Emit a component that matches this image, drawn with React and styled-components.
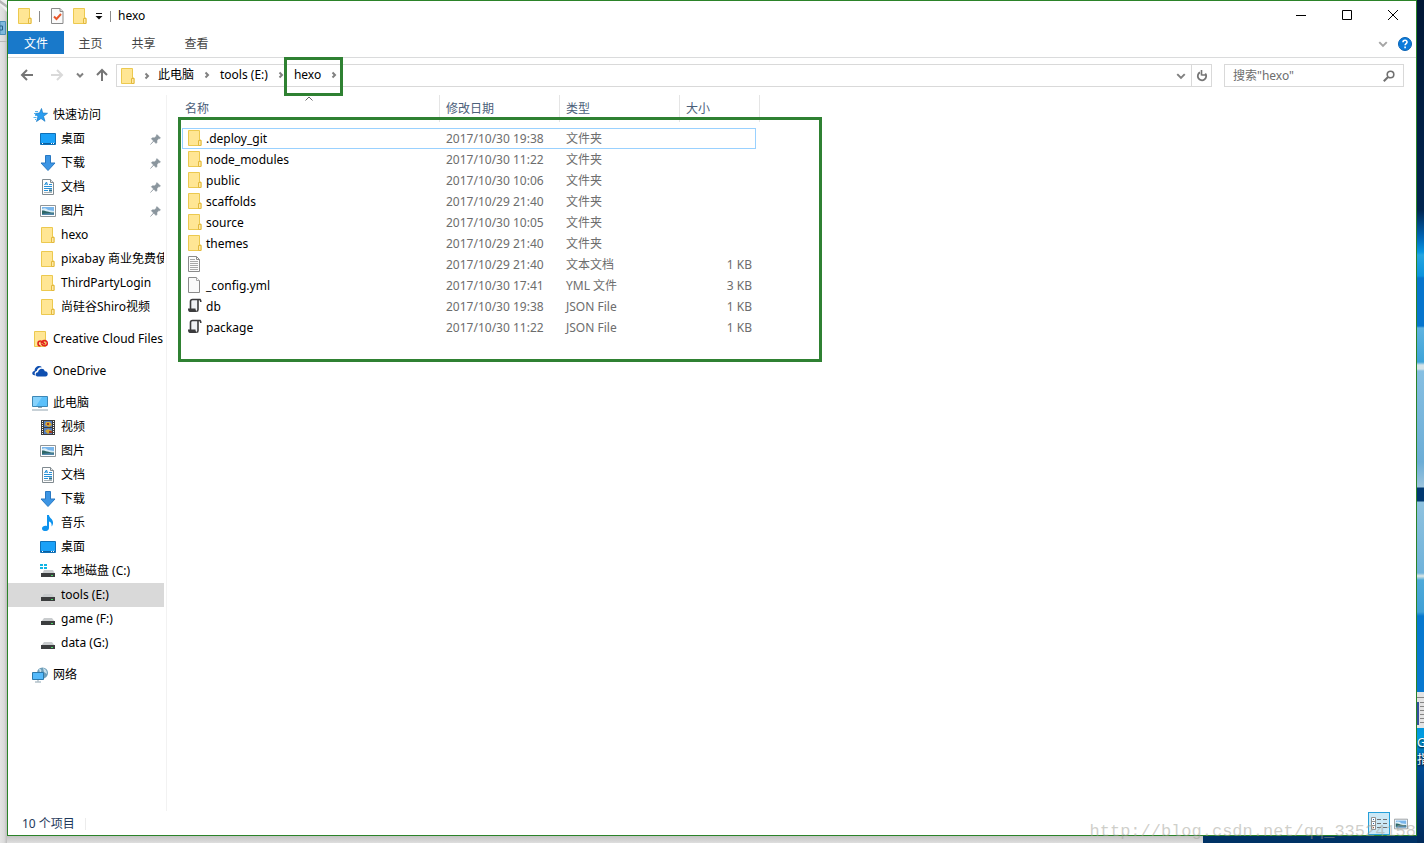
import styled, { createGlobalStyle } from 'styled-components';

const GlobalStyle = createGlobalStyle`
  * {
    box-sizing: border-box;
  }

  body {
    margin: 0;
    background: #fff;
    color: #000;
    font-family: 'Noto Sans', 'Noto Sans CJK SC', sans-serif;
    font-size: 12px;
    line-height: 16px;
  }

  button,
  input {
    font: inherit;
    color: inherit;
    border: 0;
    padding: 0;
    margin: 0;
    background: none;
  }

  svg {
    display: block;
    flex: none;
  }
`;

const Desktop = styled.div`
  position: relative;
  display: grid;
  grid-template-columns: 7px minmax(0, 1fr) 7px;
  grid-template-rows: 1fr 7px;
  min-height: calc(100vh - 9px);
  overflow: hidden;
`;

const LeftEdge = styled.div`
  grid-row: 1 / 3;
  background: linear-gradient(90deg, #e4e4e4, #dadada 60%, #bdbdbd);
`;

const RightEdge = styled.div`
  grid-row: 1 / 3;
  grid-column: 3;
  display: flex;
  flex-direction: column;
  justify-content: flex-end;
  overflow: hidden;
  background: linear-gradient(
    #011735 0,
    #012550 210px,
    #0067b8 238px,
    #0795e0 252px,
    #26a5df 255px,
    #0b93dd 276px,
    #0675cd 278px,
    #0675cd 326px,
    #5fb3e0 328px,
    #3da3d8 362px,
    #d5e3e8 365px,
    #d5e3e8 369px,
    #86bfe2 371px,
    #6cadd6 462px,
    #9cc4dd 487px,
    #003870 488px,
    #003870 501px,
    #8fc2df 502px,
    #6fb2da 573px,
    #dfe7e4 576px,
    #4ea9d9 580px,
    #3fa0d6 612px,
    #0678cf 616px,
    #0878d0 690px,
    #00a0e2 740px,
    #004b95 764px,
    #002a5a 843px
  );
`;

const Shortcut = styled.div`
  display: flex;
  flex-direction: column;
  height: 152px;
  color: #fff;
  text-shadow: 0 1px 2px #000;
  overflow: hidden;
`;

const ShortcutLabel = styled.span`
  line-height: 17px;
  white-space: nowrap;
`;

const BottomEdge = styled.div`
  display: flex;
  grid-column: 2;
  grid-row: 2;
  background: linear-gradient(#c4c4c4, #dedede);
`;

const Wallpaper = styled.div`
  width: 214px;
  margin-left: auto;
  background: #003265;
`;

const Window = styled.main`
  display: flex;
  flex-direction: column;
  grid-column: 2;
  grid-row: 1;
  border: 1px solid #2b8329;
  background: #fff;
`;

const TitleBar = styled.header`
  display: flex;
  align-items: center;
  height: 30px;
  padding-left: 10px;
`;

const Separator = styled.span`
  width: 1px;
  height: 11px;
  margin: 0 ${(p) => p.$right || 7}px 0 7px;
  background: #8c8c8c;
`;

const QuickTools = styled.div`
  display: flex;
  align-items: center;
  gap: 8px;
`;

const IconButton = styled.button`
  display: flex;
  align-items: center;
  justify-content: center;
`;

const Title = styled.h1`
  margin: 0;
  font-size: 12px;
  font-weight: 400;
`;

const WindowControls = styled.div`
  display: flex;
  align-self: flex-start;
  margin-left: auto;
`;

const WindowButton = styled(IconButton)`
  width: 46px;
  height: 28px;
`;

const Ribbon = styled.nav`
  display: flex;
  height: 27px;
  border-bottom: 1px solid #dadbdc;
`;

const RibbonTab = styled.button`
  width: ${(p) => (p.$file ? 56 : 53)}px;
  height: 23px;
  padding-top: 2px;
  color: ${(p) => (p.$file ? '#fff' : '#444')};
  background: ${(p) => (p.$file ? '#1979ca' : 'transparent')};
`;

const RibbonActions = styled.div`
  display: flex;
  align-items: center;
  gap: 10px;
  margin-left: auto;
  padding-right: 4px;
`;

const Toolbar = styled.div`
  display: flex;
  align-items: center;
  height: 37px;
  padding: 0 12px 2px 4px;
`;

const NavButton = styled(IconButton)`
  width: ${(p) => p.$width || 30}px;
  height: 23px;
  padding-bottom: 2px;
`;

const AddressBar = styled.div`
  display: flex;
  flex: 1;
  align-items: center;
  height: 23px;
  margin-right: 12px;
  padding-left: 4px;
  border: 1px solid #d9d9d9;
`;

const Crumb = styled.div`
  position: relative;
  display: flex;
  align-items: center;
  padding-bottom: 2px;
`;

const CrumbArrow = styled.span`
  display: flex;
  justify-content: center;
  width: ${(p) => (p.$first ? 23 : 26)}px;
`;

const AddressActions = styled.div`
  display: flex;
  align-self: stretch;
  margin-left: auto;
`;

const AddressButton = styled(IconButton)`
  width: 20px;
  border-left: ${(p) => (p.$divided ? '1px solid #d9d9d9' : '0')};
`;

const SearchBox = styled.label`
  display: flex;
  align-items: center;
  width: 180px;
  height: 23px;
  padding: 0 8px;
  border: 1px solid #d9d9d9;
`;

const SearchInput = styled.input`
  flex: 1;
  min-width: 0;
  outline: none;

  &::placeholder {
    color: #6d6d6d;
    opacity: 1;
  }
`;

const Highlight = styled.div`
  position: absolute;
  border: 3px solid #2f8132;
  pointer-events: none;
`;

const CrumbHighlight = styled(Highlight)`
  top: -10px;
  left: -10px;
  width: 59px;
  height: 39px;
`;

const ListHighlight = styled(Highlight)`
  top: 22px;
  left: 11px;
  width: 644px;
  height: 245px;
`;

const Content = styled.div`
  display: flex;
  flex: 1;
`;

const Sidebar = styled.nav`
  width: 159px;
  padding: 8px 2px 0 0;
  border-right: 1px solid #f2f2f2;
`;

const TreeGroup = styled.ul`
  margin: 0 0 8px;
  padding: 0;
  list-style: none;
`;

const TreeItem = styled.a`
  display: flex;
  align-items: center;
  gap: 5px;
  height: 24px;
  padding: 0 3px 0 ${(p) => (p.$root ? 24 : 32)}px;
  overflow: hidden;
  color: #000;
  background: ${(p) => (p.$selected ? '#d9d9d9' : 'transparent')};
  text-decoration: none;
  white-space: nowrap;
`;

const PinSlot = styled.span`
  margin-left: auto;
`;

const FilePane = styled.section`
  position: relative;
  flex: 1;
  min-width: 0;
  padding-left: 15px;
`;

const FileTable = styled.table`
  display: block;
`;

const TableHead = styled.thead`
  display: block;
  margin-bottom: 6px;
`;

const TableBody = styled.tbody`
  display: block;
`;

const HeaderRow = styled.tr`
  display: grid;
  grid-template-columns: 258px 120px 120px 80px;
`;

const HeaderCell = styled.th`
  position: relative;
  height: 27px;
  padding: 6px 6px 5px ${(p) => (p.$first ? 3 : 6)}px;
  border-right: 1px solid #e5e5e5;
  color: #4c607a;
  font-weight: 400;
  text-align: left;
`;

const SortMark = styled.span`
  position: absolute;
  top: 0;
  left: 123px;
`;

const FileRow = styled.tr`
  display: grid;
  grid-template-columns: 258px 120px 120px 78px;
  width: 574px;
  height: 21px;
  outline: ${(p) => (p.$focused ? '1px solid #99d1ff' : 'none')};
  outline-offset: -1px;
`;

const NameCell = styled.td`
  display: flex;
  align-items: flex-start;
  gap: 4px;
  padding: 2px 0 0 6px;
  line-height: 18px;
`;

const Cell = styled.td`
  padding: 3px 6px 2px;
  color: #6d6d6d;
  text-align: ${(p) => (p.$right ? 'right' : 'left')};
`;

const StatusBar = styled.footer`
  display: flex;
  align-items: center;
  height: 24px;
  padding: 1px 4px 0 14px;
  color: #1e395b;
`;

const StatusDivider = styled.span`
  width: 1px;
  height: 12px;
  margin-left: 10px;
  background: #ececec;
`;

const ViewButtons = styled.div`
  display: flex;
  align-self: stretch;
  margin-left: auto;
`;

const ViewButton = styled(IconButton)`
  width: 22px;
  border: 1px solid ${(p) => (p.$active ? '#26a0da' : 'transparent')};
  background: ${(p) => (p.$active ? '#cbe8f6' : 'transparent')};
`;

const Watermark = styled.div`
  position: absolute;
  right: 8px;
  bottom: 1px;
  color: rgba(160, 160, 150, 0.5);
  font-family: 'Liberation Mono', monospace;
  font-size: 17px;
  line-height: 20px;
  pointer-events: none;
`;

const FolderIcon = ({ width = 14 }) => (
  <svg width={width} height="16" viewBox="0 0 14 16">
    <path d="M.5.5h11v9.5h1.5v5.5H.5z" fill="#ffe694" stroke="#ecc94f" />
    <path d="M10.5 15.5v-5H13v5z" fill="#ffeaa5" stroke="#e3b93e" />
  </svg>
);

const ChecklistIcon = () => (
  <svg width="14" height="16" viewBox="0 0 14 16">
    <path d="M.5.5h8.5l3 3v12H.5z" fill="#fafafa" stroke="#8a8a8a" />
    <path d="M9 .5v3h3" fill="#ddd" stroke="#8a8a8a" />
    <path d="M3 8.5 5.5 11 10 6" fill="none" stroke="#e8572a" strokeWidth="2" />
  </svg>
);

const MenuCaret = () => (
  <svg width="8" height="8" viewBox="0 0 8 8">
    <path d="M1 1h6v1H1zM.5 4h7L4 7.5z" fill="#111" />
  </svg>
);

const Chevron = ({ size = 8, dir = 'right', color = '#808080', weight = 2 }) => {
  const paths = {
    right: 'M2.5 1.5 5 4 2.5 6.5',
    down: 'M1 2.5 4 5.5 7 2.5',
    up: 'M.5 5.5 4 2 7.5 5.5',
  };
  return (
    <svg width={size} height={size} viewBox="0 0 8 8">
      <path d={paths[dir]} fill="none" stroke={color} strokeWidth={weight} vectorEffect="non-scaling-stroke" />
    </svg>
  );
};

const Arrow = ({ dir, color = '#757575' }) => {
  const paths = {
    left: 'M13 7H2M7 2 2 7l5 5',
    right: 'M1 7h11M7 2l5 5-5 5',
    up: 'M7 13V2M2 7l5-5 5 5',
  };
  return (
    <svg width="14" height="14" viewBox="0 0 14 14">
      <path d={paths[dir]} fill="none" stroke={color} strokeWidth="2" />
    </svg>
  );
};

const StarIcon = () => (
  <svg width="16" height="16" viewBox="0 0 16 16">
    <path d="m9.500 1.500 1.200 4.500 4.800.3-4 3 1.500 5L9 11.500 4.500 14.500l1.500-5L2.500 6.500 7.500 6z" fill="#2a9df0" stroke="#1579c4" strokeWidth=".7" />
    <path d="M3 4.500h3M2 6.500h2M3 8.500h2M1.500 10.500h3M3 12.500h1" stroke="#4fb3f0" />
  </svg>
);

const DesktopIcon = () => (
  <svg width="16" height="16" viewBox="0 0 16 16">
    <path d="M.5 2.500h15v11H.500z" fill="#1aa1f8" stroke="#0e70b8" />
    <path d="M15 3v8L5 13h10z" fill="#3db0fb" />
    <path d="M1 12.500h14" stroke="#0b5f9e" />
    <path d="M2 12.500h1M11 12.500h1M13 12.500h1" stroke="#fff" />
  </svg>
);

const DownloadIcon = () => (
  <svg width="16" height="16" viewBox="0 0 16 16">
    <path d="M5.500.500h5V8h4.500L8 15.500 1 8h4.500z" fill="#3c95e4" stroke="#2878c2" />
  </svg>
);

const DocumentIcon = () => (
  <svg width="16" height="16" viewBox="0 0 16 16">
    <path d="M2.500.500h8l3 3v12h-11z" fill="#fdfdfd" stroke="#808a90" />
    <path d="M10.500.500v3h3" fill="#e6e6e6" stroke="#808a90" />
    <path d="m4.500 6 2-3 1 3M5 5h2M9 5.500h3M4 7.500h8M4 9.500h8M4 11.500h4" fill="none" stroke="#2590d8" />
    <path d="M9 10.500h3v2H9z" fill="#2b7190" />
    <path d="M4 13.500h8" stroke="#a8b0b4" />
  </svg>
);

const PictureIcon = ({ width = 16 }) => (
  <svg width={width} height={width} viewBox="0 0 16 16">
    <path d="M.5 2.500h15v11H.500z" fill="#fff" stroke="#8e9599" />
    <path d="M2 4h12v8H2z" fill="#79b6ec" />
    <path d="M2 6c3-2 5 0 6 1l6 1v2H2z" fill="#d8edf8" />
    <path d="M2 7.500c4 0 6 2 12 2v1.500H2z" fill="#2d6667" />
    <path d="M2 11c4-1 8-1 12-.5V12H2z" fill="#5187aa" />
  </svg>
);

const CreativeCloudIcon = () => (
  <svg width="16" height="16" viewBox="0 0 16 16">
    <path d="M2.500.500h11v15h-11z" fill="#ffe694" stroke="#ecc94f" />
    <path d="M8.500 15a2.500 2.500 0 0 1 0-5c2 0 3 3 4.500 3M9 12.500C10 9 15 8.500 15.200 12S11 15.500 9.500 13" fill="none" stroke="#e1251b" strokeWidth="1.600" />
  </svg>
);

const OneDriveIcon = () => (
  <svg width="16" height="16" viewBox="0 0 16 16">
    <path d="M1.500 12C-.500 11.500 0 8 2.500 8 2.500 4 7 1.500 10 4.200 6.500 4 5 6 4.800 8 2.500 8.500 2 11 3.500 12.500z" fill="#0f4fb0" />
    <path d="M5.500 13.500C2.500 13 3.500 9 6 9.300 6.500 5 12 4.500 12.800 8.200c3.500-.200 4 4.800.700 5.300z" fill="#0f4fb0" />
  </svg>
);

const ComputerIcon = () => (
  <svg width="16" height="16" viewBox="0 0 16 16">
    <path d="M.5 1.500h15v10H.500z" fill="#5bc0fa" stroke="#3d87b5" />
    <path d="M1 2h9L4 11H1z" fill="#86d2fc" />
    <path d="M6 12.500h4M0 15h16" stroke="#91a4b0" />
  </svg>
);

const VideoIcon = () => (
  <svg width="16" height="16" viewBox="0 0 16 16">
    <path d="M1 1h14v15H1z" fill="#3c3c3c" />
    <path d="M4 2h8v6H4zM4 9h8v6H4z" fill="#547fc2" />
    <path d="M6 3h4l2 3-3 2-4-2zM5 12l3-2 4 2-4 3z" fill="#d4a835" />
    <path d="M7 4h2v2H7zM9 12h3v2H9z" fill="#a33c24" />
    <path d="M2.500 2v13M13.500 2v13" stroke="#fff" strokeDasharray="1 1" />
  </svg>
);

const MusicIcon = () => (
  <svg width="16" height="16" viewBox="0 0 16 16">
    <path d="M7 0h2c0 3 4.500 4 4 8.500-.200 1.500-1 2.500-1.500 3C12 8.500 11 7 9 6.500V13c0 4-7 4-7 .500C2 11 5 10.300 7 11z" fill="#0f93ee" />
  </svg>
);

const DriveIcon = ({ system }) => (
  <svg width="16" height="16" viewBox="0 0 16 16">
    {system && <path d="M0 1h3v2H0zM4 1h3v2H4zM0 4h3v2H0zM4 4h3v2H4z" fill="#12b5e5" />}
    <path d={system ? 'M4 7h9l2 4H2z' : 'M4 7h8l3 4H1z'} fill="#c9ccce" />
    <path d="M1 10h14v4H1z" fill="#3b3d3e" />
    <path d="M11 12.500h2" stroke="#4bd665" />
  </svg>
);

const NetworkIcon = () => (
  <svg width="16" height="16" viewBox="0 0 16 16">
    <circle cx="10.500" cy="6" r="5.500" fill="#6e9eb9" />
    <path d="M7 2c3 0 3 2 1 4M11 1c3 1 4 3 4 6l-3-2z" fill="#c8e0ec" />
    <path d="M.5 5.500h11v7H.500z" fill="#55bafb" stroke="#2c79ab" />
    <path d="M6 13v1.500M3 15h6" stroke="#8da3b0" />
  </svg>
);

const PinIcon = () => (
  <svg width="11" height="11" viewBox="0 0 11 11">
    <path d="m7 .500 3.500 3.500-1 .700-.700-.200L7 6.500v2l-1 1L3.800 7.200.500 10.500 3.500 7 1.300 4.800l1-1h2.200L6.500 2 6.300 1.200z" fill="#8a959d" stroke="#8a959d" strokeWidth=".5" />
  </svg>
);

const TextFileIcon = () => (
  <svg width="14" height="16" viewBox="0 0 14 16">
    <path d="M.5.500h8l3 3v12H.500z" fill="#fcfcfc" stroke="#8b8b8b" />
    <path d="M8.500.500v3h3" fill="none" stroke="#8b8b8b" />
    <path d="M2 3.500h5M2 5.500h8M2 7.500h8M2 9.500h8M2 11.500h8M2 13.500h8" stroke="#a8a8a8" />
  </svg>
);

const BlankFileIcon = () => (
  <svg width="14" height="16" viewBox="0 0 14 16">
    <path d="M.5.500h8l3 3v12H.500z" fill="#fafafa" stroke="#8b8b8b" />
    <path d="M8.500.500v3h3" fill="#fff" stroke="#a5a5a5" />
  </svg>
);

const JsonFileIcon = () => (
  <svg width="14" height="16" viewBox="0 0 14 16">
    <path d="M3 2h7v10H3z" fill="#eff1f4" />
    <path d="M2.500 11V3.500C2.500 2.300 3 1.500 4.500 1.500H12c.700.500.800 1 .800 2.500M10 2v9.500c0 1-.500 1.800-1.500 1.800" fill="none" stroke="#3b3b3d" strokeWidth="1.600" />
    <path d="M0 10.500h7.500c0 1.500.500 2 1.500 3.500H2C.500 14 0 12.500 0 10.500z" fill="#3b3b3d" />
  </svg>
);

const RefreshIcon = () => (
  <svg width="12" height="12" viewBox="0 0 12 12">
    <path d="M9.300 3.500A4.200 4.200 0 1 1 4 2.400" fill="none" stroke="#757575" strokeWidth="1.800" />
    <path d="M5.500 0v5.500M5.500 5h4.500" fill="none" stroke="#757575" strokeWidth="1.600" />
  </svg>
);

const SearchIcon = () => (
  <svg width="12" height="12" viewBox="0 0 12 12">
    <circle cx="7.500" cy="4.500" r="3.300" fill="none" stroke="#707070" strokeWidth="1.600" />
    <path d="M5 7 .800 11.200" stroke="#707070" strokeWidth="2" />
  </svg>
);

const HelpIcon = () => (
  <svg width="14" height="14" viewBox="0 0 14 14">
    <circle cx="7" cy="7" r="6.500" fill="#0b7bdb" stroke="#0862b3" />
    <path d="M5 5.300C5 2.500 9.200 2.600 9 5.200 8.900 6.600 7.100 6.600 7.100 8.300M7.100 9.500v1.700" fill="none" stroke="#fff" strokeWidth="1.600" />
  </svg>
);

const DetailsIcon = () => (
  <svg width="16" height="13" viewBox="0 0 16 13">
    <path d="M.5.500h4v12h-4zM.500 4.500h4M.500 8.500h4" fill="#fff" stroke="#909090" />
    <path d="M2 2.500h1M2 6.500h1" stroke="#2a6db0" />
    <path d="M2 10.500h1" stroke="#c02020" />
    <path d="M6 2.500h4M12 2.500h4M6 6.500h4M12 6.500h4M6 10.500h4M12 10.500h4" stroke="#707070" />
  </svg>
);

const quickAccess = [
  { label: '快速访问', icon: <StarIcon />, root: true },
  { label: '桌面', icon: <DesktopIcon />, pinned: true },
  { label: '下载', icon: <DownloadIcon />, pinned: true },
  { label: '文档', icon: <DocumentIcon />, pinned: true },
  { label: '图片', icon: <PictureIcon />, pinned: true },
  { label: 'hexo', icon: <FolderIcon width={16} /> },
  { label: 'pixabay 商业免费使用', icon: <FolderIcon width={16} /> },
  { label: 'ThirdPartyLogin', icon: <FolderIcon width={16} /> },
  { label: '尚硅谷Shiro视频', icon: <FolderIcon width={16} /> },
];

const computer = [
  { label: '此电脑', icon: <ComputerIcon />, root: true },
  { label: '视频', icon: <VideoIcon /> },
  { label: '图片', icon: <PictureIcon /> },
  { label: '文档', icon: <DocumentIcon /> },
  { label: '下载', icon: <DownloadIcon /> },
  { label: '音乐', icon: <MusicIcon /> },
  { label: '桌面', icon: <DesktopIcon /> },
  { label: '本地磁盘 (C:)', icon: <DriveIcon system /> },
  { label: 'tools (E:)', icon: <DriveIcon />, selected: true },
  { label: 'game (F:)', icon: <DriveIcon /> },
  { label: 'data (G:)', icon: <DriveIcon /> },
];

const tree = [
  quickAccess,
  [{ label: 'Creative Cloud Files', icon: <CreativeCloudIcon />, root: true }],
  [{ label: 'OneDrive', icon: <OneDriveIcon />, root: true }],
  computer,
  [{ label: '网络', icon: <NetworkIcon />, root: true }],
];

const files = [
  { name: '.deploy_git', date: '2017/10/30 19:38', type: '文件夹', icon: <FolderIcon /> },
  { name: 'node_modules', date: '2017/10/30 11:22', type: '文件夹', icon: <FolderIcon /> },
  { name: 'public', date: '2017/10/30 10:06', type: '文件夹', icon: <FolderIcon /> },
  { name: 'scaffolds', date: '2017/10/29 21:40', type: '文件夹', icon: <FolderIcon /> },
  { name: 'source', date: '2017/10/30 10:05', type: '文件夹', icon: <FolderIcon /> },
  { name: 'themes', date: '2017/10/29 21:40', type: '文件夹', icon: <FolderIcon /> },
  { name: '', date: '2017/10/29 21:40', type: '文本文档', size: '1 KB', icon: <TextFileIcon /> },
  { name: '_config.yml', date: '2017/10/30 17:41', type: 'YML 文件', size: '3 KB', icon: <BlankFileIcon /> },
  { name: 'db', date: '2017/10/30 19:38', type: 'JSON File', size: '1 KB', icon: <JsonFileIcon /> },
  { name: 'package', date: '2017/10/30 11:22', type: 'JSON File', size: '1 KB', icon: <JsonFileIcon /> },
];

const crumbs = ['此电脑', 'tools (E:)', 'hexo'];

const TopBar = () => (
  <TitleBar>
    <FolderIcon />
    <Separator $right={11} />
    <QuickTools>
      <IconButton aria-label="属性"><ChecklistIcon /></IconButton>
      <IconButton aria-label="新建文件夹"><FolderIcon /></IconButton>
      <IconButton aria-label="自定义快速访问工具栏"><MenuCaret /></IconButton>
    </QuickTools>
    <Separator />
    <Title>hexo</Title>
    <WindowControls>
      <WindowButton aria-label="最小化">
        <svg width="10" height="10"><path d="M0 5.500h10" stroke="#000" /></svg>
      </WindowButton>
      <WindowButton aria-label="最大化">
        <svg width="10" height="10"><path d="M.5.500h9v9h-9z" fill="none" stroke="#000" /></svg>
      </WindowButton>
      <WindowButton aria-label="关闭">
        <svg width="10" height="10"><path d="m0 0 10 10M10 0 0 10" stroke="#000" /></svg>
      </WindowButton>
    </WindowControls>
  </TitleBar>
);

const RibbonBar = () => (
  <Ribbon>
    <RibbonTab $file>文件</RibbonTab>
    <RibbonTab>主页</RibbonTab>
    <RibbonTab>共享</RibbonTab>
    <RibbonTab>查看</RibbonTab>
    <RibbonActions>
      <IconButton aria-label="展开功能区"><Chevron size={10} dir="down" color="#a5a5a5" /></IconButton>
      <IconButton aria-label="帮助"><HelpIcon /></IconButton>
    </RibbonActions>
  </Ribbon>
);

const NavigationBar = () => (
  <Toolbar>
    <NavButton aria-label="后退"><Arrow dir="left" /></NavButton>
    <NavButton aria-label="前进"><Arrow dir="right" color="#d9d9d9" /></NavButton>
    <NavButton aria-label="最近的位置" $width={16}><Chevron dir="down" /></NavButton>
    <NavButton aria-label="向上" $width={28}><Arrow dir="up" /></NavButton>
    <AddressBar>
      <FolderIcon />
      <CrumbArrow $first><Chevron /></CrumbArrow>
      {crumbs.map((name) => (
        <Crumb key={name}>
          <button>{name}</button>
          <CrumbArrow><Chevron /></CrumbArrow>
          {name === 'hexo' && <CrumbHighlight />}
        </Crumb>
      ))}
      <AddressActions>
        <AddressButton aria-label="历史记录"><Chevron size={10} dir="down" /></AddressButton>
        <AddressButton aria-label="刷新" $divided><RefreshIcon /></AddressButton>
      </AddressActions>
    </AddressBar>
    <SearchBox>
      <SearchInput type="text" aria-label="搜索" placeholder={'搜索"hexo"'} />
      <SearchIcon />
    </SearchBox>
  </Toolbar>
);

const TreeNav = () => (
  <Sidebar>
    {tree.map((group) => (
      <TreeGroup key={group[0].label}>
        {group.map((item) => (
          <li key={item.label}>
            <TreeItem href="#" $root={item.root} $selected={item.selected}>
              {item.icon}
              <span>{item.label}</span>
              {item.pinned && <PinSlot><PinIcon /></PinSlot>}
            </TreeItem>
          </li>
        ))}
      </TreeGroup>
    ))}
  </Sidebar>
);

const FileList = () => (
  <FilePane>
    <FileTable>
      <TableHead>
        <HeaderRow>
          <HeaderCell $first>
            名称
            <SortMark><Chevron dir="up" color="#666" weight={1} /></SortMark>
          </HeaderCell>
          <HeaderCell>修改日期</HeaderCell>
          <HeaderCell>类型</HeaderCell>
          <HeaderCell>大小</HeaderCell>
        </HeaderRow>
      </TableHead>
      <TableBody>
        {files.map((file, i) => (
          <FileRow key={file.name} $focused={i === 0}>
            <NameCell>
              {file.icon}
              <span>{file.name}</span>
            </NameCell>
            <Cell>{file.date}</Cell>
            <Cell>{file.type}</Cell>
            <Cell $right>{file.size}</Cell>
          </FileRow>
        ))}
      </TableBody>
    </FileTable>
    <ListHighlight />
  </FilePane>
);

const App = () => {
  return (
    <>
      <GlobalStyle />
      <Desktop>
        <LeftEdge>
          <svg width="7" height="44" viewBox="0 0 7 44">
            <path d="M0 0h7v12L0 5z" fill="#f0f0f0" />
            <path d="m0 0 7 5v3L0 3z" fill="#b5b5b5" />
            <path d="M0 21.500h5.500v13H0z" fill="#7fb8dc" stroke="#4c8fb8" />
            <path d="M0 26h2.500v4H0" fill="none" stroke="#27618a" />
            <path d="M0 41.500h7" stroke="#b8b8b8" />
          </svg>
        </LeftEdge>
        <Window>
          <TopBar />
          <RibbonBar />
          <NavigationBar />
          <Content>
            <TreeNav />
            <FileList />
          </Content>
          <StatusBar>
            <span>10 个项目</span>
            <StatusDivider />
            <ViewButtons>
              <ViewButton $active aria-label="详细信息"><DetailsIcon /></ViewButton>
              <ViewButton aria-label="大图标"><PictureIcon width={14} /></ViewButton>
            </ViewButtons>
          </StatusBar>
        </Window>
        <RightEdge>
          <Shortcut>
            <svg width="7" height="43" viewBox="0 0 7 43">
              <path d="M0 1h7v36H0z" fill="#e3e3e3" />
              <path d="M0 6.500h7M3 11.500h4M3 15.500h4M3 19.500h4M3 23.500h4M3 27.500h4M3 31.500h4" stroke="#858585" />
              <path d="M0 11h2v23H0z" fill="#334f9c" />
            </svg>
            <ShortcutLabel>G</ShortcutLabel>
            <ShortcutLabel>指</ShortcutLabel>
          </Shortcut>
        </RightEdge>
        <BottomEdge>
          <Wallpaper />
        </BottomEdge>
        <Watermark>http://blog.csdn.net/qq_33524158</Watermark>
      </Desktop>
    </>
  );
};

export default App;
